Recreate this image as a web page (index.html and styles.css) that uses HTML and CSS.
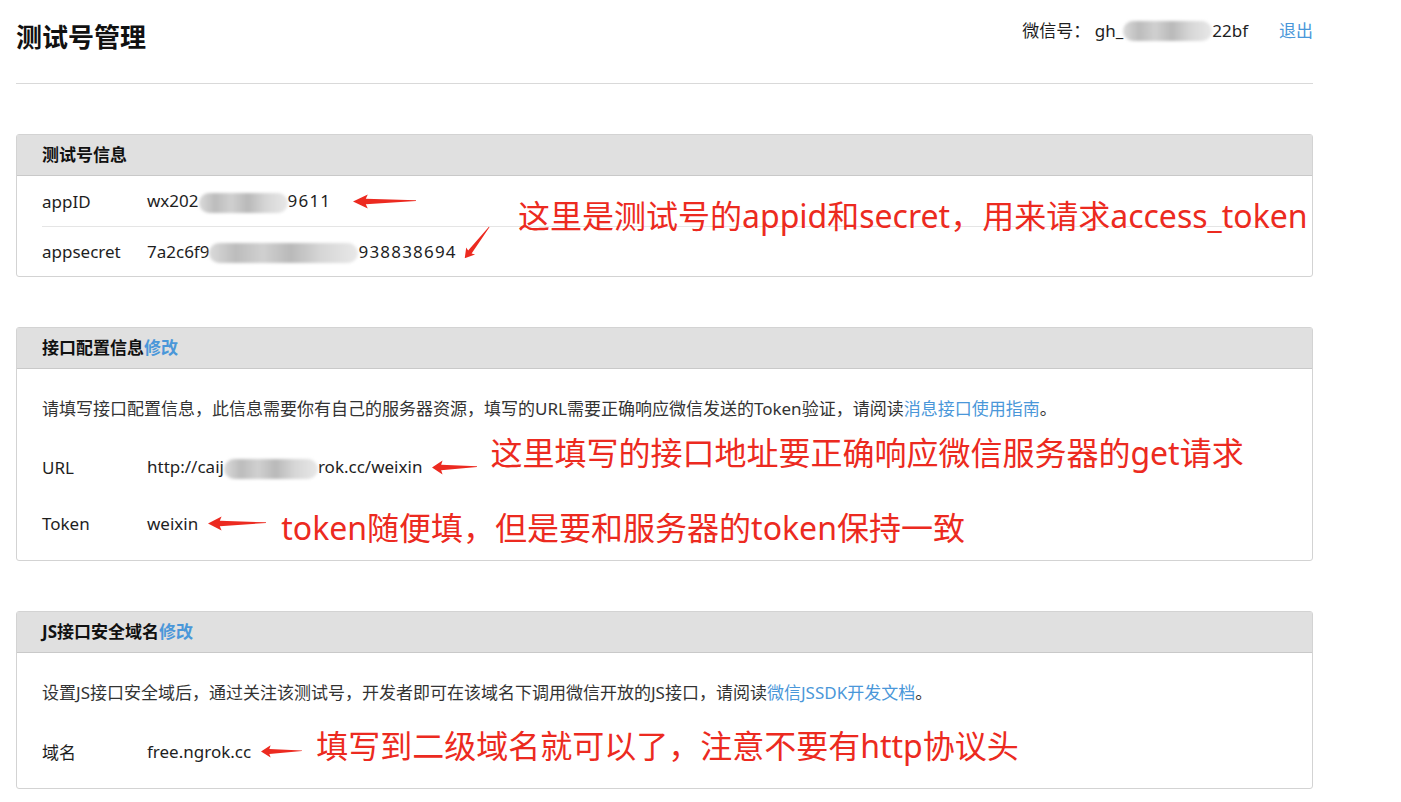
FILE: index.html
```html
<!DOCTYPE html>
<html lang="zh-CN">
<head>
    <meta charset="UTF-8">
    <meta name="viewport" content="width=device-width, initial-scale=1.0">
    <title>测试号管理</title>
    <link rel="stylesheet" href="styles.css">
</head>
<body>
  <div class="page">
    <div class="top_bar">
      <h1 class="title">测试号管理</h1>
      <div class="account">
        <span>微信号<span class="punct">：</span>&nbsp;gh_</span><span class="mask mask_gh"></span><span>22bf</span>
        <a class="logout" href="#">退出</a>
      </div>
    </div>

    <!-- 测试号信息 -->
    <div class="panel">
      <div class="panel_head">测试号信息</div>
      <div class="info_row">
        <span class="label">appID</span>
        <span class="value">wx202<span class="mask mask_id"></span><span class="digits">9611</span></span>
        <svg class="arrow arrow_id" viewBox="0 0 64 16" preserveAspectRatio="none"><polygon points="0,8.5 15,1.5 13,5.8 64,7.3 64,8 13,11.3 15,15.5" /></svg>
      </div>
      <div class="info_row">
        <span class="label">appsecret</span>
        <span class="value">7a2c6f9<span class="mask mask_secret"></span><span class="digits">938838694</span></span>
        <svg class="arrow arrow_secret" viewBox="0 0 64 16" preserveAspectRatio="none"><polygon points="0,8.5 15,1.5 13,5.8 64,7.3 64,8 13,11.3 15,15.5" /></svg>
      </div>
      <p class="note note_top">这里是测试号的appid和secret<span class="punct">，</span>用来请求access_token</p>
    </div>

    <!-- 接口配置信息 -->
    <div class="panel">
      <div class="panel_head">接口配置信息<a class="head_link" href="#">修改</a></div>
      <div class="panel_body">
        <p class="desc">请填写接口配置信息<span class="punct">，</span>此信息需要你有自己的服务器资源<span class="punct">，</span>填写的URL需要正确响应微信发送的Token验证<span class="punct">，</span>请阅读<a href="#">消息接口使用指南</a>。</p>
        <div class="field_row">
          <span class="label">URL</span>
          <span class="value">http://caij<span class="mask mask_url"></span>rok.cc/weixin</span>
          <svg class="arrow arrow_url" viewBox="0 0 64 16" preserveAspectRatio="none"><polygon points="0,8.5 15,1.5 13,5.8 64,7.3 64,8 13,11.3 15,15.5" /></svg>
          <span class="note note_url">这里填写的接口地址要正确响应微信服务器的get请求</span>
        </div>
        <div class="field_row">
          <span class="label">Token</span>
          <span class="value">weixin</span>
          <svg class="arrow arrow_token" viewBox="0 0 64 16" preserveAspectRatio="none"><polygon points="0,8.5 15,1.5 13,5.8 64,7.3 64,8 13,11.3 15,15.5" /></svg>
          <span class="note note_token">token随便填<span class="punct">，</span>但是要和服务器的token保持一致</span>
        </div>
      </div>
    </div>

    <!-- JS接口安全域名 -->
    <div class="panel">
      <div class="panel_head">JS接口安全域名<a class="head_link" href="#">修改</a></div>
      <div class="panel_body">
        <p class="desc">设置JS接口安全域后<span class="punct">，</span>通过关注该测试号<span class="punct">，</span>开发者即可在该域名下调用微信开放的JS接口<span class="punct">，</span>请阅读<a href="#">微信JSSDK开发文档</a>。</p>
        <div class="field_row">
          <span class="label">域名</span>
          <span class="value">free.ngrok.cc</span>
          <svg class="arrow arrow_domain" viewBox="0 0 64 16" preserveAspectRatio="none"><polygon points="0,8.5 15,1.5 13,5.8 64,7.3 64,8 13,11.3 15,15.5" /></svg>
          <span class="note note_domain">填写到二级域名就可以了<span class="punct">，</span>注意不要有http协议头</span>
        </div>
      </div>
    </div>
  </div>
</body>
</html>
```

FILE: styles.css
```css
*{
  margin:0;
  padding:0;
  box-sizing: border-box;
}
body{
  font-family: "Noto Sans", "Noto Sans CJK SC", sans-serif;
  font-size: 17px;
  color: #1e1e1e;
  background: #fff;
}
a{
  color: #4a97d9;
  text-decoration: none;
}
/* 가운데 정렬된 전각 구두점 */
.punct{
  font-family: "Noto Sans CJK TC", sans-serif;
}
.page{
  width: 1297px;
  margin-left: 16px;
  padding-bottom: 40px;
}
.top_bar{
  height: 84px;
  padding-top: 20px;
  border-bottom: 1px solid #d9d9d9;
  display: flex;
  justify-content: space-between;
  align-items: flex-start;
}
.title{
  font-size: 26px;
  line-height: 34px;
  font-weight: bold;
  color: #111;
}
.account{
  display: flex;
  align-items: center;
  line-height: 20px;
  font-size: 17px;
}
.logout{
  margin-left: 31px;
}
.mask{
  display: inline-block;
  height: 20px;
  border-radius: 10px;
  vertical-align: middle;
  background: linear-gradient(90deg, #dadada, #bcbcbc 18%, #d0d0d0 36%, #b9b9b9 55%, #d6d6d6 75%, #e8e8e8);
  filter: blur(1.5px);
}
.mask_gh{ width: 89px; }
.mask_id{ width: 89px; }
.mask_secret{ width: 149px; }
.mask_url{ width: 94px; }
.digits{
  letter-spacing: 1.2px;
}

.panel{
  position: relative;
  margin-top: 50px;
  border: 1px solid #d3d3d3;
  border-radius: 3px;
}
.panel_head{
  height: 41px;
  line-height: 40px;
  padding-left: 25px;
  background: #e0e0e0;
  border-bottom: 1px solid #c9c9c9;
  font-weight: bold;
  font-size: 17px;
  color: #111;
}
.info_row{
  display: flex;
  align-items: center;
  height: 50px;
  margin: 0 25px;
}
.info_row + .info_row{
  border-top: 1px solid #e5e5e5;
}
.label{
  width: 105px;
  flex-shrink: 0;
}
.value{
  white-space: nowrap;
}
.panel_body{
  padding: 19px 25px 9px;
}
.desc{
  line-height: 40px;
  color: #333;
  margin-bottom: 10px;
}
.field_row{
  display: flex;
  align-items: center;
  height: 56px;
}

/* 빨간 주석 */
.arrow{
  fill: #ec2a20;
  height: 16px;
  flex-shrink: 0;
}
.arrow_id{ width: 63px; margin-left: 22px; }
.arrow_secret{
  width: 40px;
  height: 13px;
  transform: translateY(-9px) rotate(-51deg);
}
.arrow_url{ width: 45px; margin-left: 10px; }
.arrow_token{ width: 58px; margin-left: 10px; }
.arrow_domain{ width: 41px; margin-left: 10px; height: 14px; }
.note{
  color: #ec2a20;
  font-size: 32px;
  line-height: 40px;
  white-space: nowrap;
}
.note_top{
  position: absolute;
  left: 501px;
  top: 59px;
}
.note_url{ margin-left: 13px; transform: translateY(-14px); }
.note_token{ margin-left: 15px; transform: translateY(4px); }
.note_domain{ margin-left: 14px; transform: translateY(-6px); }
```
